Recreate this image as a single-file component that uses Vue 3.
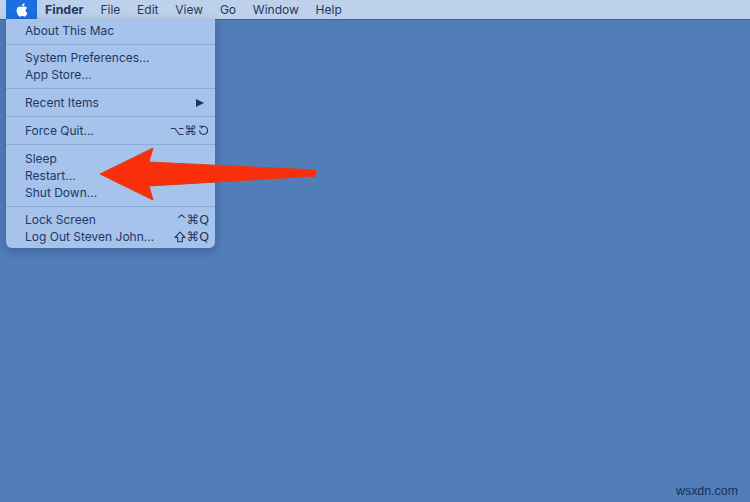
<script setup>
const sections = [
  [{ label: 'About This Mac' }],
  [{ label: 'System Preferences...' }, { label: 'App Store...' }],
  [{ label: 'Recent Items', arrow: true }],
  [{ label: 'Force Quit...', keys: '⌥⌘', restart: true }],
  [{ label: 'Sleep' }, { label: 'Restart...' }, { label: 'Shut Down...' }],
  [{ label: 'Lock Screen', keys: '^⌘Q' }, { label: 'Log Out Steven John...', keys: '⌘Q', shift: true }],
]
const menus = ['File', 'Edit', 'View', 'Go', 'Window', 'Help']
</script>

<template>
  <div class="desktop">
    <header class="menubar">
      <div class="apple">
        <svg viewBox="0 0 24 24" width="16" height="16" fill="#fff"><path d="M18.71 19.5c-.83 1.24-1.71 2.45-3.05 2.47-1.34.03-1.77-.79-3.29-.79-1.53 0-2 .77-3.27.82-1.31.05-2.3-1.32-3.14-2.53C4.25 17 2.94 12.45 4.7 9.39c.87-1.52 2.43-2.48 4.12-2.51 1.28-.02 2.5.87 3.29.87.78 0 2.26-1.07 3.81-.91.65.03 2.47.26 3.64 1.98-.09.06-2.17 1.28-2.15 3.81.03 3.02 2.65 4.03 2.68 4.04-.03.07-.42 1.44-1.38 2.83M13 3.5c.73-.83 1.94-1.46 2.94-1.5.13 1.17-.34 2.35-1.04 3.19-.69.85-1.83 1.51-2.95 1.42-.15-1.15.41-2.35 1.05-3.11z"/></svg>
      </div>
      <span class="finder">Finder</span>
      <span v-for="m in menus" :key="m" class="menu-title">{{ m }}</span>
    </header>

    <div class="dropdown">
      <section v-for="(sec, i) in sections" :key="i" class="group">
        <div v-for="item in sec" :key="item.label" class="row">
          <span>{{ item.label }}</span>
          <span v-if="item.arrow" class="arrow-right"></span>
          <span v-if="item.keys" class="keys">
            <svg v-if="item.shift" viewBox="0 0 12 12" width="12" height="12" fill="none" stroke="#1f3763" stroke-width="1.1" stroke-linejoin="round"><path d="M6 1.2 11 6.4H8.3V10.8H3.7V6.4H1Z"/></svg>
            {{ item.keys }}
            <svg v-if="item.restart" viewBox="0 0 12 12" width="11" height="11" fill="none" stroke="#1f3763" stroke-width="1.2"><path d="M3.2 2.6A4.4 4.4 0 1 1 1.7 6"/><path d="M1.4 1.4h2.4v2.4" /></svg>
          </span>
        </div>
      </section>
    </div>

    <svg class="red-arrow" viewBox="0 0 750 502" width="750" height="502">
      <path d="M149 186 316 176.500 316 173 150 181Z" fill="#b8402c"/>
      <path d="M100 174 153 148 149 162 316 170 316 176 149 186 153 200Z" fill="#f92f0c" stroke="#d9401f" stroke-width="1" stroke-linejoin="round"/>
    </svg>

    <span class="watermark">wsxdn.com</span>
  </div>
</template>

<style scoped>
.desktop {
  position: relative;
  width: 750px;
  height: 502px;
  overflow: hidden;
  background: linear-gradient(#47709f 0, #4f7bb5 12px, #517db9 40px);
  font-family: Inter, "Liberation Sans", sans-serif;
  color: #1f3763;
}
.menubar {
  display: flex;
  align-items: center;
  height: 19px;
  padding-left: 6px;
  background: #bdd1ea;
  border-bottom: 1px solid #3f628f;
  box-sizing: content-box;
  font-size: 12px;
}
.apple {
  display: flex;
  align-items: center;
  justify-content: center;
  width: 31px;
  height: 19px;
  background: #1c6fdc;
}
.finder {
  margin-left: 8px;
  font-weight: 700;
  font-size: 12.4px;
}
.menu-title {
  margin-left: 16.8px;
}
.dropdown {
  position: absolute;
  left: 6px;
  top: 19px;
  width: 209px;
  height: 229px;
  box-sizing: border-box;
  padding-top: 2.5px;
  background: #a6c3ec;
  border-radius: 0 0 6px 6px;
  box-shadow: 0 3px 10px rgba(30, 55, 100, 0.4);
  font-size: 12px;
}
.group + .group {
  margin-top: 5px;
  padding-top: 4.8px;
  border-top: 1px solid #8daad4;
}
.row {
  display: flex;
  align-items: center;
  justify-content: space-between;
  height: 17px;
  padding: 0 6px 0 19px;
}
.arrow-right {
  width: 0;
  height: 0;
  margin-right: 5px;
  border-left: 8px solid #1f3763;
  border-top: 4.5px solid transparent;
  border-bottom: 4.5px solid transparent;
}
.keys {
  display: flex;
  align-items: center;
  gap: 1px;
  font-family: "DejaVu Sans", sans-serif;
  font-size: 12.5px;
}
.red-arrow {
  position: absolute;
  left: 0;
  top: 0;
}
.watermark {
  position: absolute;
  right: 12px;
  top: 484px;
  font-family: "Liberation Sans", sans-serif;
  font-size: 12.4px;
  color: #17305c;
}
</style>
